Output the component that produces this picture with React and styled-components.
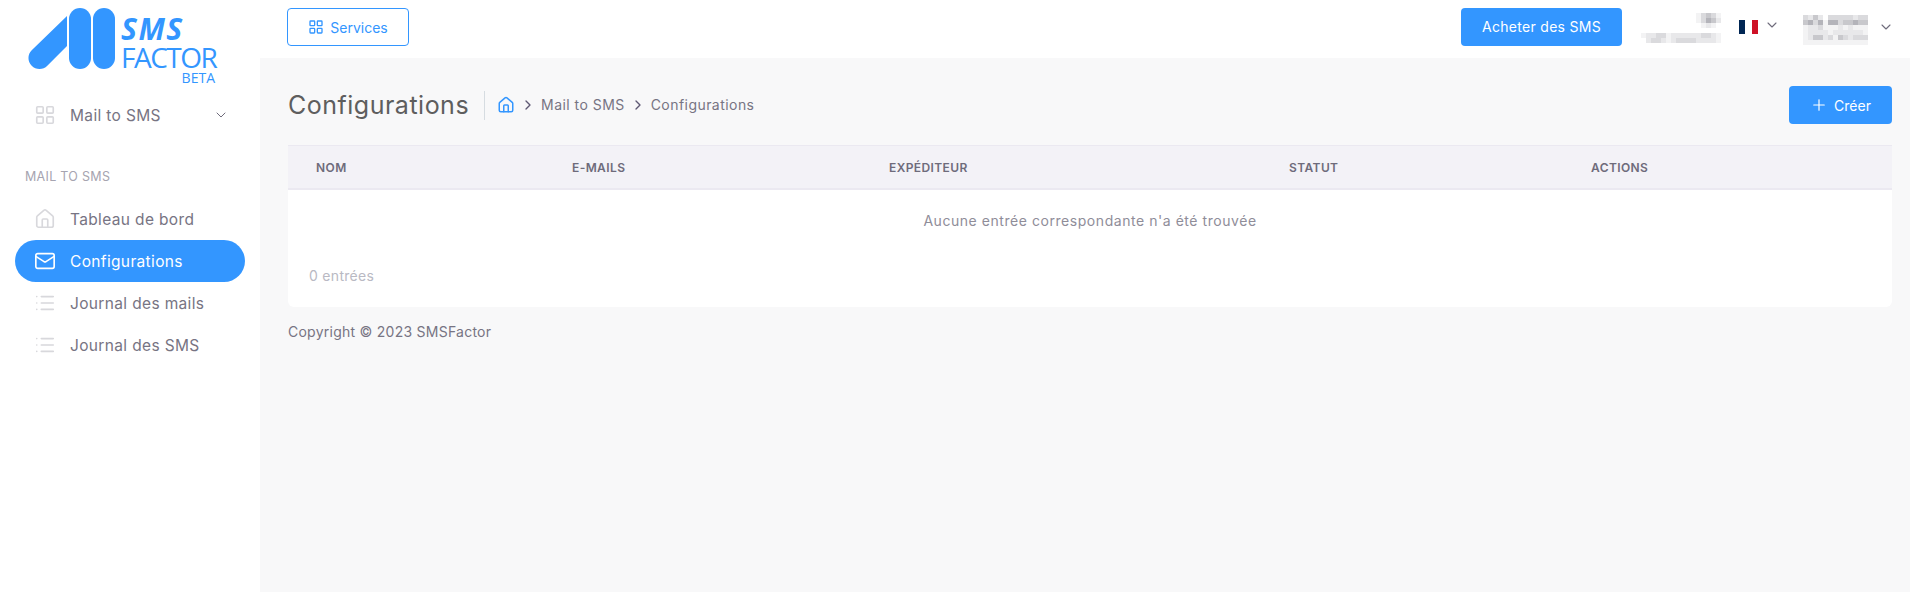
import React from "react";
import styled, { createGlobalStyle } from "styled-components";
import { ChevronDown, ChevronRight, LayoutGrid, House, Mail, List, Plus } from "lucide-react";

const BLUE = "#3396ff";

const GlobalStyle = createGlobalStyle`
    * { box-sizing: border-box; }
    html, body { margin: 0; height: 100%; }
    body {
        background: #f8f8f9;
        font-family: Inter, "Open Sans", "Liberation Sans", sans-serif;
        color: #777483;
    }
`;

const Logo = () => (
    <LogoBox>
        <svg width="88" height="62" viewBox="28 8 88 62">
            <path d="M67 16 L67 46 L47.3 65.8 A11 11 0 0 1 31.7 50.2 Z" fill={BLUE} />
            <rect x="69" y="8" width="22" height="61" rx="11" fill={BLUE} />
            <rect x="93" y="8" width="22" height="61" rx="11" fill={BLUE} />
        </svg>
        <LogoText>
            <LogoSms>SMS</LogoSms>
            <LogoFactor>FACTOR</LogoFactor>
            <LogoBeta>BETA</LogoBeta>
        </LogoText>
    </LogoBox>
);

const COMPANY_BLUR = [
    [0, 0, 0, 0, 0, 0, 0, 0, 0, 0, 0, 1, 3, 4, 3, 1],
    [0, 0, 0, 0, 0, 0, 0, 0, 0, 0, 0, 1, 3, 5, 4, 2],
    [0, 0, 0, 0, 0, 0, 0, 0, 0, 0, 0, 0, 1, 2, 1, 0],
    [0, 0, 0, 0, 0, 0, 0, 0, 0, 0, 0, 0, 0, 0, 0, 0],
    [1, 2, 2, 3, 3, 1, 2, 2, 2, 2, 2, 2, 3, 3, 2, 1],
    [0, 2, 3, 3, 2, 1, 2, 3, 3, 3, 3, 2, 2, 2, 2, 1],
];
const USER_BLUR = [
    [3, 2, 4, 2, 0, 3, 3, 3, 3, 3, 2, 3, 3],
    [4, 5, 3, 5, 1, 5, 5, 3, 4, 4, 5, 4, 4],
    [1, 2, 2, 3, 1, 1, 1, 2, 1, 2, 1, 1, 1],
    [1, 2, 2, 2, 2, 1, 2, 2, 2, 2, 2, 2, 1],
    [1, 2, 4, 4, 2, 3, 1, 4, 3, 2, 3, 3, 3],
    [1, 1, 1, 1, 1, 1, 1, 1, 1, 1, 1, 1, 1],
];
const SHADES = ["#ffffff", "#f3f3f4", "#e8e8ea", "#dadadd", "#c8c8cc", "#b4b4ba"];

const Blurred = ({ rows, cell = 5 }) => (
    <svg width={rows[0].length * cell} height={rows.length * cell} shapeRendering="crispEdges">
        {rows.map((row, y) =>
            row.map((v, x) => (
                <rect key={`${x}-${y}`} x={x * cell} y={y * cell} width={cell} height={cell} fill={SHADES[v]} />
            ))
        )}
    </svg>
);

const NAV = [
    { label: "Tableau de bord", Icon: House },
    { label: "Configurations", Icon: Mail, active: true },
    { label: "Journal des mails", Icon: List },
    { label: "Journal des SMS", Icon: List },
];

const COLUMNS = [
    { label: "Nom", width: 256 },
    { label: "E-mails", width: 317 },
    { label: "Expéditeur", width: 400 },
    { label: "Statut", width: 302 },
    { label: "Actions", width: 329 },
];

export default function App() {
    return (
        <>
            <GlobalStyle />
            <Page>
                <Sidebar>
                    <Logo />
                    <ModuleRow>
                        <NavIcon><LayoutGrid size={22} strokeWidth={1.8} /></NavIcon>
                        <NavLabel>Mail to SMS</NavLabel>
                        <ChevronDown size={16} color="#6e6b7b" strokeWidth={1.5} />
                    </ModuleRow>
                    <SectionTitle>MAIL TO SMS</SectionTitle>
                    <NavList>
                        {NAV.map(({ label, Icon, active }) => (
                            <NavItem key={label} $active={active}>
                                <NavIcon $active={active}><Icon size={22} strokeWidth={1.8} /></NavIcon>
                                <NavLabel>{label}</NavLabel>
                            </NavItem>
                        ))}
                    </NavList>
                </Sidebar>
                <Main>
                    <TopBar>
                        <ServicesButton><LayoutGrid size={16} />Services</ServicesButton>
                        <TopRight>
                            <BuyButton>Acheter des SMS</BuyButton>
                            <CompanyBlock><Blurred rows={COMPANY_BLUR} /></CompanyBlock>
                            <FlagBox>
                                <FlagStripe $color="#002654" />
                                <FlagStripe $color="#ffffff" />
                                <FlagStripe $color="#ce1126" />
                            </FlagBox>
                            <FlagChevron><ChevronDown size={16} color="#6e6b7b" strokeWidth={1.6} /></FlagChevron>
                            <UserBlock><Blurred rows={USER_BLUR} /></UserBlock>
                            <ChevronDown size={16} color="#6e6b7b" strokeWidth={1.6} />
                        </TopRight>
                    </TopBar>
                    <Content>
                        <HeaderRow>
                            <Title>Configurations</Title>
                            <Breadcrumb>
                                <House size={18} color={BLUE} />
                                <ChevronRight size={16} color="#5e5873" />
                                <Crumb>Mail to SMS</Crumb>
                                <ChevronRight size={16} color="#5e5873" />
                                <Crumb>Configurations</Crumb>
                            </Breadcrumb>
                            <CreateButton><Plus size={18} strokeWidth={1.6} />Créer</CreateButton>
                        </HeaderRow>
                        <Card>
                            <TableHead>
                                {COLUMNS.map((c) => (
                                    <HeadCell key={c.label} $width={c.width}>{c.label}</HeadCell>
                                ))}
                            </TableHead>
                            <EmptyRow>Aucune entrée correspondante n'a été trouvée</EmptyRow>
                            <Count>0 entrées</Count>
                        </Card>
                        <Footer>Copyright © 2023 SMSFactor</Footer>
                    </Content>
                </Main>
            </Page>
        </>
    );
}

const Page = styled.div`
    display: flex;
    min-height: 592px;
`;
const Sidebar = styled.aside`
    width: 260px;
    flex-shrink: 0;
    background: #fff;
    padding: 8px 15px 0;
`;
const LogoBox = styled.div`
    display: flex;
    height: 80px;
    margin-left: 13px;
    align-items: flex-start;
`;
const LogoText = styled.div`
    display: flex;
    flex-direction: column;
    width: 94px;
    margin-left: 5px;
    padding-top: 7px;
    font-family: "Open Sans", sans-serif;
    color: ${BLUE};
`;
const LogoSms = styled.span`
    font-size: 30px;
    line-height: 28px;
    font-weight: 700;
    font-style: italic;
    letter-spacing: 1.5px;
`;
const LogoFactor = styled.span`
    font-size: 28px;
    line-height: 28px;
    letter-spacing: -1.5px;
    white-space: nowrap;
`;
const LogoBeta = styled.span`
    font-size: 14px;
    line-height: 14px;
    font-weight: 500;
    text-align: right;
`;
const ModuleRow = styled.div`
    display: flex;
    align-items: center;
    height: 36px;
    padding: 0 10px 0 19px;
    margin-top: 9px;
    & > svg { margin-left: auto; margin-right: 6px; }
`;
const NavIcon = styled.span`
    display: flex;
    width: 22px;
    margin-right: 14px;
    color: ${(p) => (p.$active ? "#fff" : "#d8d8dc")};
`;
const NavLabel = styled.span`
    font-size: 15.5px;
    letter-spacing: 0.35px;
`;
const SectionTitle = styled.div`
    margin: 34px 0 0 10px;
    font-size: 12.5px;
    letter-spacing: 0.3px;
    color: #a6a4b0;
    line-height: 20px;
`;
const NavList = styled.div`
    display: flex;
    flex-direction: column;
    margin-top: 11px;
`;
const NavItem = styled.div`
    display: flex;
    align-items: center;
    height: 42px;
    padding-left: 19px;
    border-radius: 21px;
    background: ${(p) => (p.$active ? BLUE : "transparent")};
    color: ${(p) => (p.$active ? "#fff" : "#777483")};
`;
const Main = styled.main`
    flex: 1;
    min-width: 0;
`;
const TopBar = styled.header`
    height: 58px;
    background: #fff;
    padding: 8px 16px 0 27px;
    display: flex;
    align-items: flex-start;
    justify-content: space-between;
`;
const ServicesButton = styled.button`
    display: flex;
    align-items: center;
    justify-content: center;
    gap: 6px;
    width: 122px;
    height: 38px;
    background: #fff;
    border: 1px solid ${BLUE};
    border-radius: 4px;
    color: ${BLUE};
    font: inherit;
    font-size: 14px;
`;
const TopRight = styled.div`
    display: flex;
    align-items: center;
    height: 38px;
`;
const BuyButton = styled.button`
    width: 161px;
    height: 38px;
    margin-right: 19px;
    padding-bottom: 2px;
    background: ${BLUE};
    border: none;
    border-radius: 4px;
    color: #fff;
    font: inherit;
    font-size: 14px;
    letter-spacing: 0.3px;
`;
const CompanyBlock = styled.div`
    display: flex;
    margin-top: 2px;
`;
const FlagBox = styled.div`
    display: flex;
    width: 19px;
    height: 14px;
    margin: 0 6px 0 18px;
`;
const FlagStripe = styled.span`
    flex: 1;
    background: ${(p) => p.$color};
`;
const FlagChevron = styled.span`
    display: flex;
    margin-top: -4px;
`;
const UserBlock = styled.div`
    display: flex;
    margin: 6px 10px 0 23px;
`;
const Content = styled.div`
    padding: 28px 18px 0 28px;
`;
const HeaderRow = styled.div`
    display: flex;
    align-items: center;
    height: 38px;
`;
const Title = styled.h1`
    margin: 0;
    padding-right: 15px;
    font-size: 25px;
    font-weight: 400;
    letter-spacing: 0.5px;
    color: #5e5e5e;
    border-right: 1px solid #d6dce1;
    line-height: 29px;
`;
const Breadcrumb = styled.nav`
    display: flex;
    align-items: center;
    gap: 5px;
    margin-left: 12px;
`;
const Crumb = styled.span`
    margin-bottom: 2px;
    font-size: 14px;
    letter-spacing: 0.45px;
    color: #777483;
`;
const CreateButton = styled.button`
    display: flex;
    align-items: center;
    justify-content: center;
    gap: 6px;
    margin-left: auto;
    width: 103px;
    height: 38px;
    padding-bottom: 1px;
    background: ${BLUE};
    border: none;
    border-radius: 4px;
    color: #fff;
    font: inherit;
    font-size: 14px;
`;
const Card = styled.section`
    margin-top: 21px;
    height: 162px;
    background: #fff;
    border-radius: 0 0 6px 6px;
    overflow: hidden;
`;
const TableHead = styled.div`
    display: flex;
    align-items: center;
    height: 45px;
    background: #f3f2f7;
    border-top: 1px solid #ebe9f1;
    border-bottom: 2px solid #ebe9f1;
`;
const HeadCell = styled.div`
    width: ${(p) => p.$width}px;
    padding-left: 28px;
    font-size: 12px;
    font-weight: 600;
    letter-spacing: 0.4px;
    text-transform: uppercase;
    color: #6e6b7b;
`;
const EmptyRow = styled.div`
    height: 61px;
    display: flex;
    align-items: center;
    justify-content: center;
    font-size: 14px;
    letter-spacing: 0.55px;
    color: #8f8d99;
`;
const Count = styled.div`
    padding-left: 21px;
    margin-top: 16px;
    font-size: 14px;
    letter-spacing: 0.3px;
    color: #b9b9c3;
`;
const Footer = styled.footer`
    margin-top: 16px;
    font-size: 14px;
    letter-spacing: 0.25px;
    color: #777483;
`;
